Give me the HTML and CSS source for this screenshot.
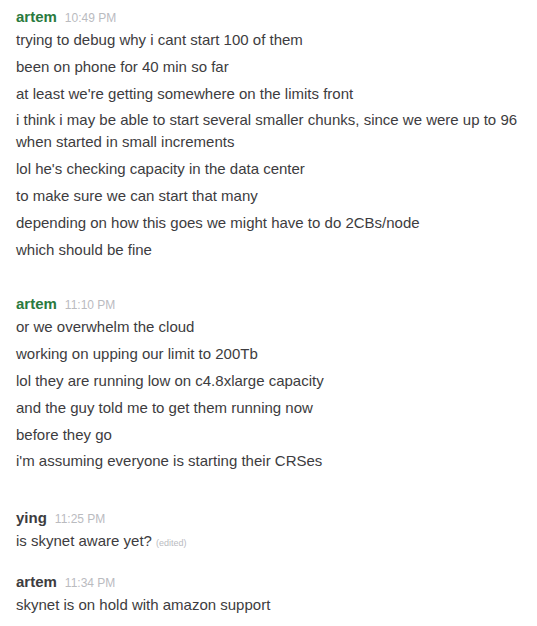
FILE: index.html
```html
<!DOCTYPE html>
<html>
<head>
<meta charset="utf-8">
<link rel="stylesheet" href="styles.css">
</head>
<body>
<div class="chat">
  <div class="group g1">
    <div class="header"><span class="name green">artem</span><span class="time">10:49 PM</span></div>
    <div class="msg">trying to debug why i cant start 100 of them</div>
    <div class="msg">been on phone for 40 min so far</div>
    <div class="msg">at least we're getting somewhere on the limits front</div>
    <div class="msg">i think i may be able to start several smaller chunks, since we were up to 96 when started in small increments</div>
    <div class="msg">lol he's checking capacity in the data center</div>
    <div class="msg">to make sure we can start that many</div>
    <div class="msg">depending on how this goes we might have to do 2CBs/node</div>
    <div class="msg">which should be fine</div>
  </div>
  <div class="group g2">
    <div class="header"><span class="name green">artem</span><span class="time">11:10 PM</span></div>
    <div class="msg">or we overwhelm the cloud</div>
    <div class="msg">working on upping our limit to 200Tb</div>
    <div class="msg">lol they are running low on c4.8xlarge capacity</div>
    <div class="msg">and the guy told me to get them running now</div>
    <div class="msg">before they go</div>
    <div class="msg">i'm assuming everyone is starting their CRSes</div>
  </div>
  <div class="group g3">
    <div class="header"><span class="name">ying</span><span class="time">11:25 PM</span></div>
    <div class="msg">is skynet aware yet? <span class="edited">(edited)</span></div>
  </div>
  <div class="group g4">
    <div class="header"><span class="name">artem</span><span class="time">11:34 PM</span></div>
    <div class="msg">skynet is on hold with amazon support</div>
  </div>
</div>
</body>
</html>
```

FILE: styles.css
```css
html, body {
  margin: 0;
  padding: 0;
  background: #ffffff;
}
body {
  font-family: "Liberation Sans", Arial, sans-serif;
  color: #3d3c40;
  font-size: 15px;
}
.chat {
  padding: 7px 8px 0 16px;
}
.header {
  line-height: 20px;
  height: 20px;
}
.name {
  font-weight: bold;
  font-size: 15px;
  color: #3d3c40;
}
.name.green {
  color: #2a7a3e;
}
.time {
  font-size: 12px;
  color: #babbbf;
  margin-left: 8px;
}
.msg {
  line-height: 22px;
  padding: 2px 0 2.8px;
}
.edited {
  font-size: 9px;
  color: #babbbf;
}
.g2 { margin-top: 31px; }
.g3 { margin-top: 33px; }
.g4 { margin-top: 15px; }
```
